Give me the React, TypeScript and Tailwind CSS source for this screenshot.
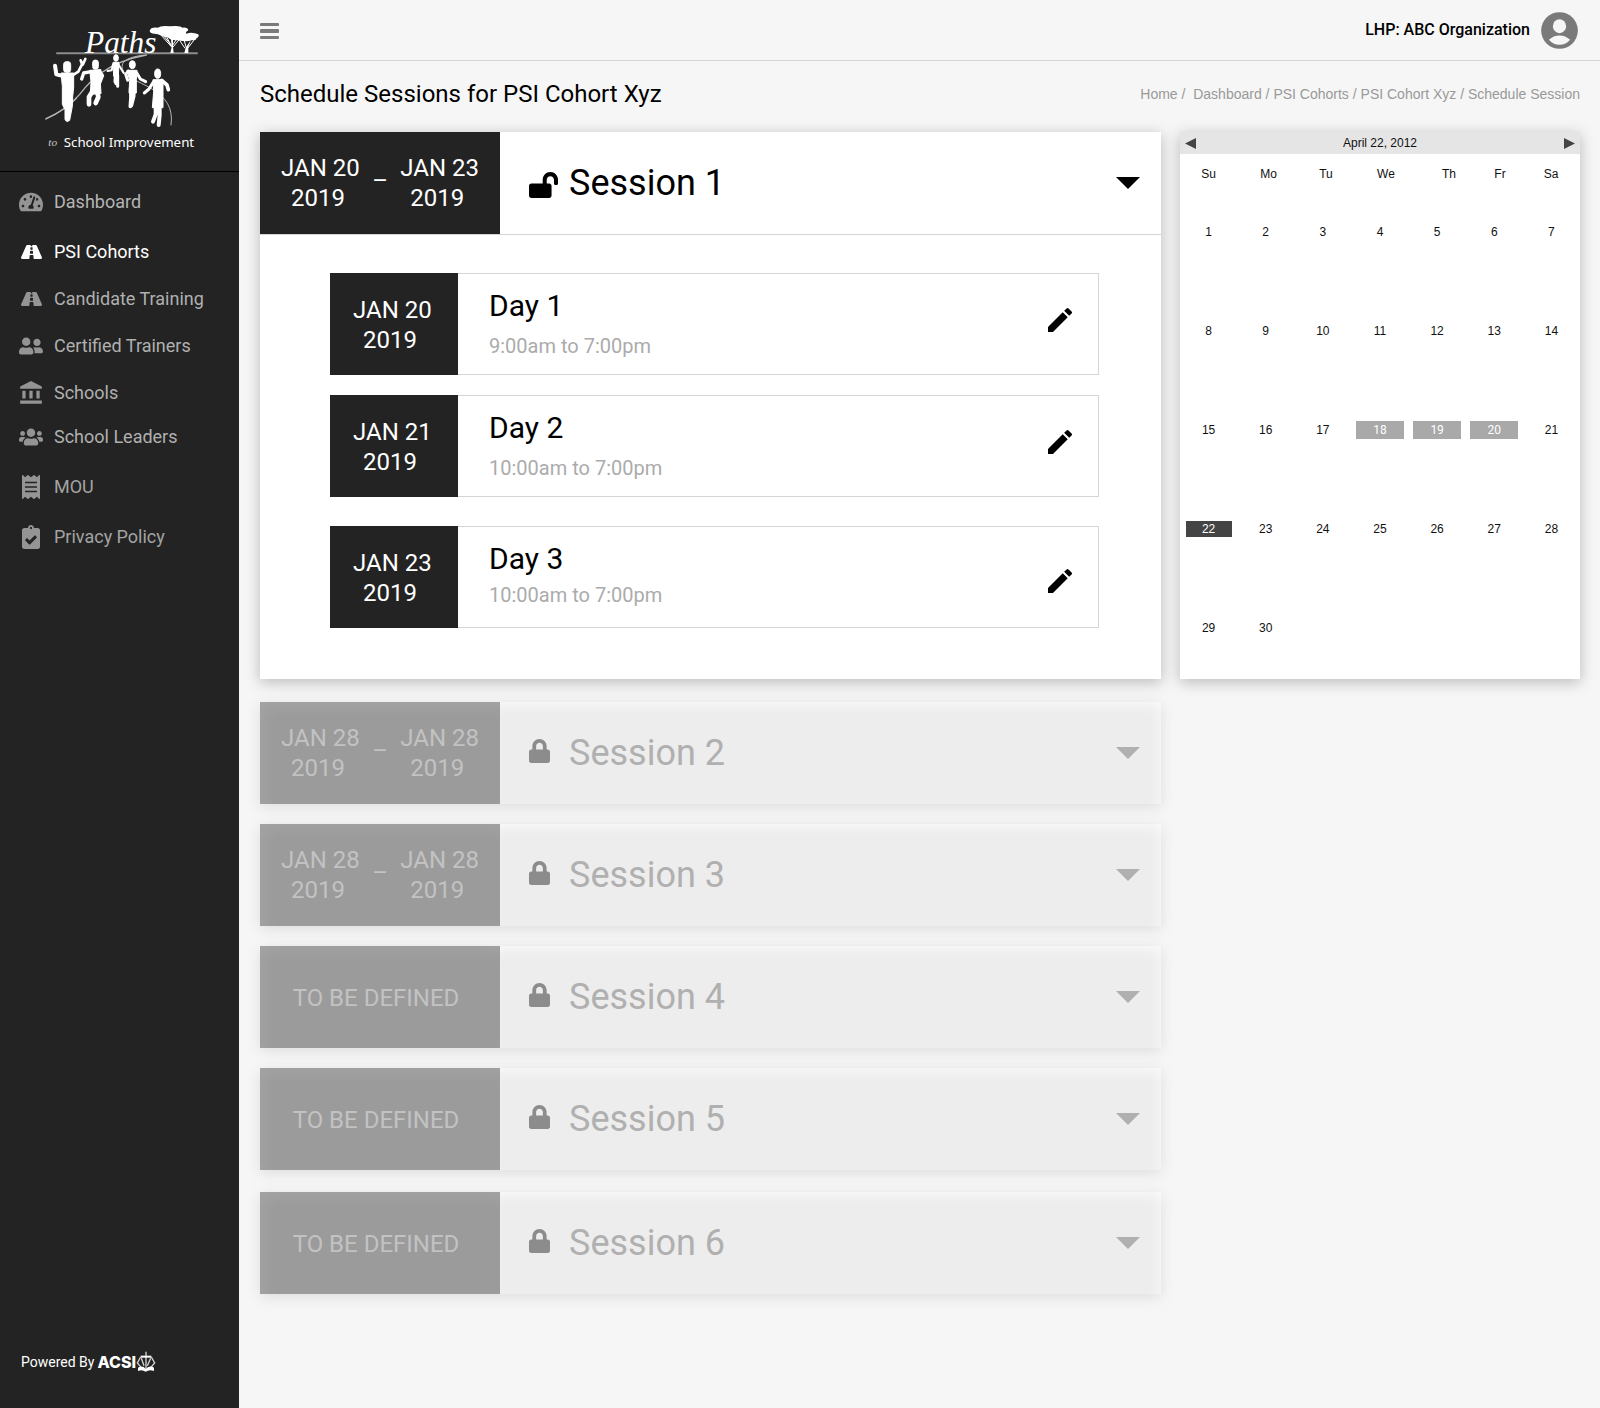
import React from "react";
import {
  FaTachometerAlt,
  FaRoad,
  FaUserFriends,
  FaUsers,
  FaReceipt,
  FaClipboardCheck,
  FaLock,
  FaLockOpen,
} from "react-icons/fa";
import { MdAccountBalance, MdEdit } from "react-icons/md";

function PathsLogo() {
  return (
    <svg viewBox="40 40 480 384" className="h-32 w-40" role="img" aria-label="Paths to School Improvement">
      <g fill="none" stroke="#b5b5b5" strokeLinecap="round">
        <path d="M82 131H502" stroke="#8c8c8c" strokeWidth="6" />
        <path d="M48 328C90 310 122 286 150 254C180 215 230 158 350 136" strokeWidth="4" />
        <path d="M50 327C90 308 118 290 140 266" strokeWidth="4" />
        <path d="M340 137C290 142 262 160 286 192C320 226 440 240 424 346" strokeWidth="3" />
      </g>
      <g fill="none" stroke="#fff" strokeLinecap="round" strokeLinejoin="round">
        <path d="M76 168L80 194L104 200" strokeWidth="12" />
        <path d="M124 200L146 186L160 158M158 166L153 152M160 164L167 148" strokeWidth="8" />
        <path d="M184 186L162 190L156 208" strokeWidth="10" />
        <path d="M208 184L218 198L210 218" strokeWidth="11" />
        <path d="M190 242L178 262L178 284" strokeWidth="14" />
        <path d="M202 242L206 262L198 280" strokeWidth="14" />
        <path d="M250 164L246 182L234 184M266 164L276 180L282 190" strokeWidth="6" />
        <path d="M257 196L256 216L259 222M264 196L264 230" strokeWidth="9" />
        <path d="M296 184L288 194L294 212" strokeWidth="9" />
        <path d="M320 188L332 208L348 216" strokeWidth="9" />
        <path d="M303 236L304 262L302 290M313 236L312 260L305 288" strokeWidth="11" />
        <path d="M372 216L358 238L344 250" strokeWidth="9" />
        <path d="M396 212L412 226L416 240" strokeWidth="11" />
        <path d="M378 286L378 314L370 336M390 288L390 316L387 346" strokeWidth="12" />
      </g>
      <g fill="#fff" stroke="#fff" strokeWidth="3" strokeLinejoin="round">
        <rect x="102" y="156" width="21" height="32" rx="8" />
        <path d="M94 190L132 190L132 232L129 262L128 290L120 332Q112 340 106 330L106 300L98 284L98 230Z" />
        <rect x="189" y="151" width="17" height="28" rx="8" />
        <path d="M180 182L214 180L212 216L214 252L182 254L184 216Z" />
        <ellipse cx="259" cy="145" rx="7" ry="10" />
        <path d="M250 158H268L266 200H252Z" />
        <ellipse cx="308" cy="165" rx="9" ry="12" />
        <path d="M292 182H322L320 210L320 250L298 250L300 212Z" />
        <ellipse cx="384" cy="192" rx="9" ry="14" />
        <path d="M370 210H400L400 246L400 294L368 294L372 246Z" />
      </g>
      <g fill="#fff">
        <path d="M360 64Q362 52 384 54Q396 46 420 50Q452 46 458 54Q474 52 476 62Q466 68 470 72Q488 66 506 74Q510 82 500 86Q502 92 486 92Q470 98 446 92Q424 92 416 84Q406 82 396 78Q384 72 374 72Q362 72 360 64Z" />
        <path d="M424 88L430 88L430 112L432 130H422L426 112Z" />
        <path d="M484 90L476 112L476 130H464L468 114Z" />
      </g>
      <g fill="none" stroke="#fff" strokeWidth="3">
        <path d="M392 74L426 112M400 76L426 108M412 84L427 112M450 88L430 112M440 90L429 106" />
        <path d="M450 92L466 116M494 90L474 116M464 94L470 114" />
      </g>
      <text x="166" y="130" fill="#fff" fontSize="94" fontStyle="italic" fontFamily="'Liberation Serif', serif">
        Paths
      </text>
      <text x="56" y="410" fill="#c8c8c8" fontSize="34" fontStyle="italic" fontFamily="'Liberation Serif', serif">
        to
      </text>
      <text x="102" y="411" fill="#fff" fontSize="40" fontFamily="'Noto Sans', sans-serif">
        School Improvement
      </text>
    </svg>
  );
}

function AcsiEmblem() {
  return (
    <svg viewBox="0 0 60 66" className="h-[22px] w-5" aria-hidden="true">
      <g fill="none" stroke="#d5d5d5" strokeWidth="4">
        <path d="M30 2V60" />
        <path d="M14 17H46" strokeWidth="6" stroke="#fff" />
        <path d="M14 18L4 36L16 50M46 18L56 36L44 50" />
        <path d="M16 22L24 44M44 22L34 44" />
      </g>
      <path d="M6 50Q20 42 29 54Q42 42 54 50V60Q40 54 29 62Q18 54 6 60Z" fill="#fff" />
    </svg>
  );
}

function Avatar() {
  return (
    <svg viewBox="0 0 112 112" className="size-[37px]" aria-hidden="true">
      <circle cx="56" cy="56" r="55.5" fill="#7a7a7a" />
      <ellipse cx="56" cy="43" rx="20" ry="21" fill="#f6f6f6" />
      <path d="M24 84Q38 71 56 71Q74 71 88 84Q76 99 56 99Q36 99 24 84Z" fill="#f6f6f6" />
    </svg>
  );
}

const navItems = [
  { label: "Dashboard", icon: <FaTachometerAlt className="h-[22px] w-6" />, gap: "", tone: "text-[#b5b5b5]" },
  { label: "PSI Cohorts", icon: <FaRoad className="h-5 w-[21px]" />, gap: "mt-[26px]", tone: "text-white" },
  { label: "Candidate Training", icon: <FaRoad className="h-5 w-[21px]" />, gap: "mt-[23px]", tone: "text-[#b0b0b0]" },
  { label: "Certified Trainers", icon: <FaUserFriends className="h-[22px] w-6" />, gap: "mt-[23px]", tone: "text-[#b0b0b0]" },
  { label: "Schools", icon: <MdAccountBalance className="size-[26px]" />, gap: "mt-[23px]", tone: "text-[#b0b0b0]" },
  { label: "School Leaders", icon: <FaUsers className="h-[22px] w-6" />, gap: "mt-5", tone: "text-[#b0b0b0]" },
  { label: "MOU", icon: <FaReceipt className="size-6" />, gap: "mt-[26px]", tone: "text-[#a3a3a3]" },
  { label: "Privacy Policy", icon: <FaClipboardCheck className="size-6" />, gap: "mt-[26px]", tone: "text-[#a3a3a3]" },
];

function Sidebar() {
  return (
    <aside className="flex w-[239px] shrink-0 flex-col bg-[#232323]">
      <div className="flex justify-center border-b border-black pt-[23px] pb-5 pl-[6px]">
        <PathsLogo />
      </div>
      <nav className="pt-[18px]" aria-label="Main">
        <ul>
          {navItems.map((item) => (
            <li key={item.label} className={item.gap}>
              <a href="#" className={`flex h-6 items-center text-lg ${item.tone}`}>
                <span
                  className={`ml-[17px] flex w-7 justify-center ${item.tone === "text-white" ? "" : "text-[#949494]"}`}
                >
                  {item.icon}
                </span>
                <span className="ml-[9px]">{item.label}</span>
              </a>
            </li>
          ))}
        </ul>
      </nav>
      <div className="mt-auto flex items-center pb-[34px] pl-[21px] text-sm text-white">
        <span>Powered By</span>
        <span className="ml-[3px] font-[Inter] text-base font-extrabold">ACSI</span>
        <AcsiEmblem />
      </div>
    </aside>
  );
}

function DateText({ date }: { date: string }) {
  return (
    <span className="block text-left text-2xl leading-[30px] whitespace-nowrap">
      <span className="block">{date}</span>
      <span className="block pl-[10px]">2019</span>
    </span>
  );
}

function Caret() {
  return (
    <svg viewBox="0 0 24 12" className="h-3 w-6" aria-hidden="true">
      <path d="M0 0H24L12 12Z" fill="currentColor" />
    </svg>
  );
}

type Session = { name: string; dates?: [string, string]; open?: boolean; gap: string };

const sessions: Session[] = [
  { name: "Session 1", dates: ["JAN 20", "JAN 23"], open: true, gap: "" },
  { name: "Session 2", dates: ["JAN 28", "JAN 28"], gap: "mt-[23px]" },
  { name: "Session 3", dates: ["JAN 28", "JAN 28"], gap: "mt-5" },
  { name: "Session 4", gap: "mt-5" },
  { name: "Session 5", gap: "mt-5" },
  { name: "Session 6", gap: "mt-[22px]" },
];

const days = [
  { name: "Day 1", date: "JAN 20", time: "9:00am to 7:00pm", gap: "", low: false },
  { name: "Day 2", date: "JAN 21", time: "10:00am to 7:00pm", gap: "mt-5", low: false },
  { name: "Day 3", date: "JAN 23", time: "10:00am to 7:00pm", gap: "mt-[29px]", low: true },
];

function SessionHeader({ session }: { session: Session }) {
  const open = session.open;
  return (
    <button type="button" aria-expanded={!!open} className="flex h-[102px] w-full text-left">
      <span
        className={`flex h-full w-60 shrink-0 justify-between px-[21px] pt-[21px] ${open ? "bg-[#232323] text-white" : "bg-[#9b9b9b] text-[#c2c2c2] shadow-[inset_6px_6px_14px_rgba(255,255,255,0.08)]"}`}
      >
        {session.dates ? (
          <>
            <DateText date={session.dates[0]} />
            <span className="pt-[13px] text-center text-2xl leading-[30px]">–</span>
            <DateText date={session.dates[1]} />
          </>
        ) : (
          <span className="w-full pt-4 pr-2 text-center text-2xl leading-[30px]">TO BE DEFINED</span>
        )}
      </span>
      <span
        className={`flex h-full flex-1 items-center pr-[21px] pl-[29px] ${open ? "text-black" : "bg-[#ededed] text-[#b0b0b0] shadow-[inset_-4px_6px_14px_-4px_rgba(255,255,255,0.8)]"}`}
      >
        <span className="w-10">
          {open ? (
            <FaLockOpen className="mt-1 h-[26px] w-[29px]" />
          ) : (
            <FaLock className="mb-1 h-6 w-[21px] text-[#8c8c8c]" />
          )}
        </span>
        <span className="flex-1 text-4xl">{session.name}</span>
        <Caret />
      </span>
    </button>
  );
}

function DayCard({ day }: { day: (typeof days)[number] }) {
  return (
    <div className={`flex h-[102px] border border-l-0 border-[#d5d5d5] ${day.gap}`}>
      <div className="-my-px w-32 shrink-0 bg-[#232323] pt-[22px] pl-[23px] text-white">
        <DateText date={day.date} />
      </div>
      <div className="flex-1 pt-3 pl-[31px]">
        <h3 className="text-3xl leading-10">{day.name}</h3>
        <p className={`text-xl leading-7 text-[#ababab] ${day.low ? "pt-[2px]" : "pt-[6px]"}`}>{day.time}</p>
      </div>
      <div className={`flex items-center pr-[22px] ${day.low ? "pt-2" : "pb-2"}`}>
        <button type="button" aria-label={`Edit ${day.name}`}>
          <MdEdit className="size-8" />
        </button>
      </div>
    </div>
  );
}

const weeks = [0, 1, 2, 3, 4].map((w) => [1, 2, 3, 4, 5, 6, 7].map((d) => w * 7 + d));

function dayStyle(d: number) {
  if (d === 22) return "h-4 w-[46px] bg-[#444] text-white";
  if (d >= 18 && d <= 20) return "h-[18px] w-12 bg-[#a9a9a9] font-[Roboto] text-white";
  return "h-4 w-12";
}

function Calendar() {
  return (
    <section className="w-[400px] shrink-0 bg-white pb-[2px] font-['Liberation_Sans'] text-xs text-[#111] shadow-[0_3px_14px_rgba(0,0,0,0.25)]">
      <div className="flex h-[22px] items-center justify-between bg-[#e5e5e5] px-[5px]">
        <button type="button" aria-label="Previous month">
          <svg viewBox="0 0 11 11" className="size-[11px]" aria-hidden="true">
            <path d="M0 5.5L11 0V11Z" fill="#444" />
          </svg>
        </button>
        <h2>April 22, 2012</h2>
        <button type="button" aria-label="Next month">
          <svg viewBox="0 0 11 11" className="size-[11px]" aria-hidden="true">
            <path d="M11 5.5L0 0V11Z" fill="#444" />
          </svg>
        </button>
      </div>
      <table className="block w-full">
        <thead className="block">
          <tr className="grid grid-cols-[57fr_63fr_52fr_68fr_58fr_44fr_58fr] pt-[13px]">
            {["Su", "Mo", "Tu", "We", "Th", "Fr", "Sa"].map((d) => (
              <th key={d} scope="col" className="text-center leading-[15px] font-normal">
                {d}
              </th>
            ))}
          </tr>
        </thead>
        <tbody className="block">
          {weeks.map((week) => (
            <tr key={week[0]} className="grid h-[99px] grid-cols-7">
              {week.map((d) => (
                <td key={d} className="flex items-center justify-center">
                  {d <= 30 && (
                    <button type="button" className={`flex items-center justify-center ${dayStyle(d)}`}>
                      {d}
                    </button>
                  )}
                </td>
              ))}
            </tr>
          ))}
        </tbody>
      </table>
    </section>
  );
}

export default function App() {
  return (
    <div className="flex min-h-screen bg-[#f6f6f6] font-[Roboto,sans-serif] text-black">
      <Sidebar />
      <main className="min-w-0 flex-1">
        <header className="flex h-[61px] items-center justify-between border-b border-[#d5d5d5] pr-[22px] pl-[21px]">
          <button type="button" aria-label="Toggle menu" className="flex flex-col gap-[3px] pt-[2px]">
            <span className="h-[3px] w-[19px] rounded-[1px] bg-[#7a7a7a]" />
            <span className="h-1 w-[19px] rounded-[1px] bg-[#7a7a7a]" />
            <span className="h-[3px] w-[19px] rounded-[1px] bg-[#7a7a7a]" />
          </button>
          <div className="flex items-center gap-[11px]">
            <span className="text-base font-medium">LHP: ABC Organization</span>
            <Avatar />
          </div>
        </header>
        <div className="pr-5 pl-[21px]">
          <div className="flex h-[71px] items-center justify-between pb-[6px]">
            <h1 className="text-2xl">Schedule Sessions for PSI Cohort Xyz</h1>
            <nav aria-label="Breadcrumb" className="font-['Liberation_Sans'] text-sm whitespace-pre text-[#999]">
              <a href="#">Home</a> /{"  "}
              <a href="#">Dashboard</a> / <a href="#">PSI Cohorts</a> / <a href="#">PSI Cohort Xyz</a> /{" "}
              <span aria-current="page">Schedule Session</span>
            </nav>
          </div>
          <div className="flex items-start gap-[19px]">
            <div className="min-w-0 flex-1">
              {sessions.map((s) =>
                s.open ? (
                  <section key={s.name} className="bg-white shadow-[0_3px_14px_rgba(0,0,0,0.25)]">
                    <SessionHeader session={s} />
                    <div className="border-t border-[#d5d5d5] pt-[38px] pr-[62px] pb-[51px] pl-[70px]">
                      {days.map((d) => (
                        <DayCard key={d.name} day={d} />
                      ))}
                    </div>
                  </section>
                ) : (
                  <section key={s.name} className={`shadow-[0_3px_14px_rgba(0,0,0,0.1)] ${s.gap}`}>
                    <SessionHeader session={s} />
                  </section>
                ),
              )}
            </div>
            <Calendar />
          </div>
        </div>
      </main>
    </div>
  );
}
